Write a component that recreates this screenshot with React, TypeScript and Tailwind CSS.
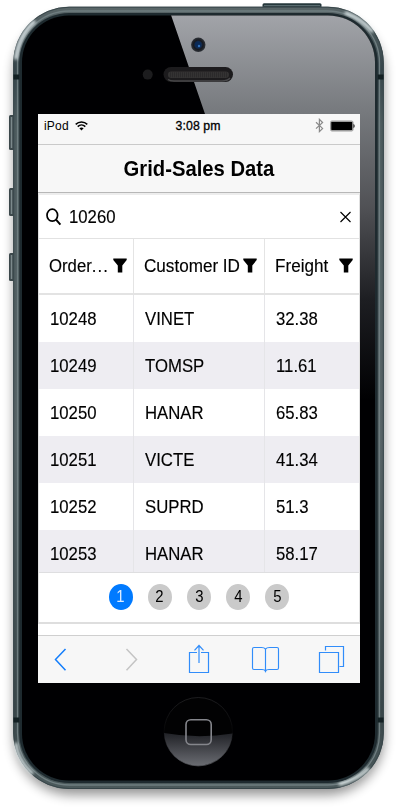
import React from "react";

const rows = [
  ["10248", "VINET", "32.38"],
  ["10249", "TOMSP", "11.61"],
  ["10250", "HANAR", "65.83"],
  ["10251", "VICTE", "41.34"],
  ["10252", "SUPRD", "51.3"],
  ["10253", "HANAR", "58.17"],
];

function PhoneBody() {
  return (
    <svg className="absolute inset-0" width="400" height="807" viewBox="0 0 400 807" fill="none">
      <defs>
        <filter id="soft" x="-10%" y="-10%" width="120%" height="120%">
          <feGaussianBlur stdDeviation="6" />
        </filter>
        <filter id="tiny" x="-50%" y="-50%" width="200%" height="200%">
          <feGaussianBlur stdDeviation="1.6" />
        </filter>
        <linearGradient id="rim" x1="0" y1="0" x2="0" y2="1">
          <stop offset="0" stopColor="#5a6668" />
          <stop offset=".08" stopColor="#36454a" />
          <stop offset=".15" stopColor="#4c5a5d" />
          <stop offset=".55" stopColor="#566265" />
          <stop offset=".9" stopColor="#394649" />
          <stop offset="1" stopColor="#4c5a5c" />
        </linearGradient>
        <linearGradient id="glare" x1="0" y1="15" x2="0" y2="400" gradientUnits="userSpaceOnUse">
          <stop offset="0" stopColor="#a2a4a9" />
          <stop offset=".26" stopColor="#75787c" />
          <stop offset=".5" stopColor="#505155" />
          <stop offset=".74" stopColor="#1d1e22" />
          <stop offset="1" stopColor="#000002" />
        </linearGradient>
        <linearGradient id="home" x1="0" y1="733" x2="0" y2="766" gradientUnits="userSpaceOnUse">
          <stop offset="0" stopColor="#202126" />
          <stop offset="1" stopColor="#6b6d73" />
        </linearGradient>
        <linearGradient id="ring" x1="0" y1="697" x2="0" y2="766" gradientUnits="userSpaceOnUse">
          <stop offset="0" stopColor="#29292c" />
          <stop offset=".5" stopColor="#08080a" />
          <stop offset="1" stopColor="#606268" />
        </linearGradient>
        <radialGradient id="lens">
          <stop offset="0" stopColor="#2e6fc4" />
          <stop offset=".35" stopColor="#123260" />
          <stop offset=".65" stopColor="#16191f" />
          <stop offset="1" stopColor="#30343a" />
        </radialGradient>
        <clipPath id="face"><rect x="22" y="15.5" width="353" height="765" rx="47" /></clipPath>
      </defs>
      <rect x="14" y="16" width="370" height="779" rx="58" fill="#000" opacity=".42" filter="url(#soft)" />
      <rect x="262.5" y="3.2" width="59" height="6" rx="1.5" fill="#26383c" />
      <path d="M264 5.5h56" stroke="#596b6f" />
      {[[115, 35], [188, 28], [253, 28]].map(([y, h]) => (
        <g key={y}>
          <rect x="9" y={y} width="6" height={h} rx="1.5" fill="#3c484b" />
          <path d={`M11.5 ${y + 2}v${h - 4}`} stroke="#7c898c" strokeWidth="1.5" />
        </g>
      ))}
      <rect x="13.2" y="6.7" width="370.6" height="782.3" rx="56" fill="url(#rim)" />
      <rect x="13.7" y="7.2" width="369.6" height="781.3" rx="55.5" stroke="#38464a" />
      <rect x="17.5" y="11" width="362" height="774" rx="52" stroke="#6f7d80" strokeWidth="1.3" />
      <g filter="url(#tiny)" strokeLinecap="round">
        <path d="M16 58C18 42 24 31 34 22" stroke="#e0e9ec" strokeWidth="3.5" />
        <path d="M346 13C357 17 365 23 372 31" stroke="#dfe9eb" strokeWidth="3" />
        <path d="M16 744C17 754 23 765 32 773" stroke="#dae4e6" strokeWidth="3" />
        <path d="M340 784C352 781 361 776 368 769" stroke="#e5eeef" strokeWidth="3" />
      </g>
      <path d="M13.5 77h6m358 0h6M13.5 720h6m358 0h6" stroke="#132023" strokeWidth="5" />
      <rect x="19.3" y="13" width="358.4" height="770" rx="50" fill="#1e2a2f" />
      <rect x="22" y="15.5" width="353" height="765" rx="47" fill="#000002" />
      <path clipPath="url(#face)" d="M171 15H375V420H344V240L205 114Z" fill="url(#glare)" />
      <circle cx="198.3" cy="44.8" r="7.2" fill="url(#lens)" />
      <circle cx="198" cy="44.5" r="3" fill="#0a2a57" />
      <circle cx="199" cy="46" r="1.2" fill="#3472bc" />
      <circle cx="147.7" cy="74.6" r="5" fill="#1c1c1e" />
      <rect x="163.5" y="67" width="69.5" height="15" rx="7.5" fill="#1c1b1d" />
      <path d="M168 79.5c2 1.5 4 1.5 6 1.5h48c4 0 6-.8 8-3" stroke="#48484a" strokeWidth="1.5" />
      <rect x="168" y="71.5" width="61" height="6.5" rx="3.2" fill="#343333" />
      <path d="M170 74.8h57" stroke="#2b2a2b" strokeWidth="5" strokeDasharray="1 1" />
      <circle cx="198.3" cy="731.7" r="34.2" fill="#020203" stroke="url(#ring)" strokeWidth=".7" />
      <path d="M164 733Q198 739 232.5 733.5A34.3 34.3 0 0 1 164 733Z" fill="url(#home)" />
      <rect x="186" y="719.7" width="25.2" height="24.8" rx="4.8" stroke="#85868c" strokeWidth="1.6" />
    </svg>
  );
}

function Funnel() {
  return (
    <svg className="mb-px shrink-0" width="14" height="15" viewBox="0 0 14 15">
      <path d="M.3.4h13.4v1.7L9.3 7.4v7H4.8v-7L.3 2.1Z" fill="#000" />
    </svg>
  );
}

function StatusBar() {
  return (
    <div className="flex h-[31px] shrink-0 items-start border-b border-[#cacaca] bg-[#f7f7f7] pt-1 pl-[6px] pr-[5px] text-[12px] leading-[15px]">
      <div className="flex w-[131.5px] items-center gap-[6px]">
        <span className="pt-px tracking-[.2px]">iPod</span>
        <svg width="13" height="10" viewBox="0 0 13 10" fill="none" stroke="#000" strokeWidth="1.5">
          <path d="M.7 3.4c3.3-3.2 8.3-3.2 11.6 0M2.7 5.6c2.2-2.1 5.4-2.1 7.6 0" />
          <path d="M4.4 7.2c1.2-1.1 3-1.1 4.2 0L6.5 9.5Z" fill="#000" stroke="none" />
        </svg>
      </div>
      <span className="whitespace-nowrap pt-px text-[12.3px] tracking-[.1px] [-webkit-text-stroke:.3px_#000]">3:08 pm</span>
      <div className="ml-auto flex items-center gap-[6px]">
        <svg width="9" height="15" viewBox="0 0 9 15" fill="none" stroke="#8a8a8a" strokeWidth="1.2">
          <path d="M1 4.2l6.6 6.2L4.4 13.6V1.3l3.2 3.2L1 10.6" />
        </svg>
        <svg width="25" height="12" viewBox="0 0 25 12">
          <rect x=".5" y="1" width="22.6" height="10" rx="1.5" fill="#fff" stroke="#777" strokeWidth=".7" />
          <rect x="1.2" y="1.7" width="21.2" height="8.6" rx=".8" />
          <path d="M23.5 4c1.5.5 1.5 3.5 0 4Z" />
        </svg>
      </div>
    </div>
  );
}

export default function App() {
  return (
    <div className="relative h-[807px] w-[400px] overflow-hidden bg-white pt-[114px] pl-[38px] font-['Liberation_Sans',Arial,sans-serif] text-black">
      <PhoneBody />
      <main className="relative flex h-[569px] w-[322px] flex-col overflow-hidden bg-white">
        <StatusBar />
        <header className="flex h-12 shrink-0 items-center justify-center border-b border-[#b7b7b7] bg-[#f7f7f7] pt-px">
          <h1 className="scale-x-[.92] whitespace-nowrap text-[22px] font-bold leading-6">Grid-Sales Data</h1>
        </header>
        <section className="flex h-[431px] shrink-0 flex-col border-x border-b-2 border-t-2 border-x-[#e0e0e0] border-b-[#dedede] border-t-[#ededed]">
          <div className="flex h-[44px] shrink-0 items-center border-b border-[#e2e2e2] pt-px pl-[6.5px] pr-[8px]">
            <svg width="16" height="18" viewBox="0 0 16 18" fill="none" stroke="#000" strokeWidth="1.7">
              <ellipse cx="6.3" cy="7.2" rx="5.3" ry="6" />
              <path d="M10 11.7l4.4 5" strokeWidth="2" />
            </svg>
            <span className="ml-[7.5px] origin-left scale-x-[.93] pt-px text-[18px] [-webkit-text-stroke:.15px_#000]">10260</span>
            <svg className="ml-auto" width="11" height="12" viewBox="0 0 11 12" stroke="#000" strokeWidth="1.15">
              <path d="M.5 1l10 10M10.5 1l-10 10" />
            </svg>
          </div>
          <div className="grid h-[56px] shrink-0 grid-cols-[94.5px_131px_94.5px] border-b-2 border-[#e3e3e3] text-[18px] [&_span]:[-webkit-text-stroke:.15px_#000]">
            <div className="flex items-center border-r border-[#e4e4e4] pl-[10px]">
              <span className="flex w-[63.5px] origin-left scale-x-[.93] whitespace-nowrap">Order<span className="tracking-[1.2px]">...</span></span><Funnel />
            </div>
            <div className="flex items-center border-r border-[#e4e4e4] pl-[10px]">
              <span className="w-[99.5px] origin-left scale-x-[.95] whitespace-nowrap">Customer ID</span><Funnel />
            </div>
            <div className="flex items-center justify-between pl-[10px] pr-[6px]">
              <span className="origin-left scale-x-[.95]">Freight</span><Funnel />
            </div>
          </div>
          <div className="flex h-[278px] shrink-0 flex-col overflow-hidden border-b border-[#dedee0]">
            {rows.map((row, i) => (
              <div key={row[0]} className={`grid h-[47px] shrink-0 grid-cols-[94.5px_131px_94.5px] text-[18px] ${i % 2 ? "bg-[#eeedf2]" : "bg-white"}`}>
                {row.map((cell, j) => (
                  <div key={j} className={`flex items-center pl-[11px] pt-px ${j < 2 ? "border-r border-[#e5e5e8]" : ""}`}>
                    <span className="origin-left scale-x-[.93] [-webkit-text-stroke:.15px_#000]">{cell}</span>
                  </div>
                ))}
              </div>
            ))}
          </div>
          <nav className="flex min-h-0 flex-1 items-center justify-center gap-[15px] pb-px text-[16px]">
            {[1, 2, 3, 4, 5].map((n) => (
              <button key={n} className={`flex h-[26px] w-[24.2px] items-center justify-center rounded-[50%] ${n === 1 ? "bg-[#007aff] text-[#dcecff]" : "bg-[#cacaca]"}`}>
                <span className="scale-x-[.93]">{n}</span>
              </button>
            ))}
          </nav>
        </section>
        <footer className="mt-[11px] flex flex-1 items-center border-t border-[#cfcfcf] bg-[#f7f7f7]">
          <svg width="322" height="47" viewBox="0 0 322 47" fill="none" stroke="#318dfa" strokeWidth="1">
            <path d="M27.5 13L17.5 23.5l10 10.7" stroke="#147efb" strokeWidth="1.5" />
            <path d="M88.5 13l10 10.5-10 10.7" stroke="#c4c4c4" strokeWidth="1.5" />
            <path d="M159 16.5h-7.5v20h19v-20H163M161 27V9.5m-4.5 4.8L161 9.5l4.5 4.8" strokeWidth="1.2" />
            <path d="M227.5 13.2c-.9-1.5-2-1.7-4-1.7H216c-1 0-1.5.5-1.5 1.5v19c0 1 .5 1.5 1.5 1.5h8c2 0 3 .5 3.5 1.7.5-1.2 1.5-1.7 3.5-1.7h8c1 0 1.5-.5 1.5-1.5V13c0-1-.5-1.5-1.5-1.5h-7.5c-2 0-3.1.2-4 1.7Zm0 0v23" strokeWidth="1.15" />
            <path d="M281.5 16.5h19v20h-19zM287.5 14.5v-4h18v20h-4" strokeWidth="1.2" />
          </svg>
        </footer>
      </main>
    </div>
  );
}
